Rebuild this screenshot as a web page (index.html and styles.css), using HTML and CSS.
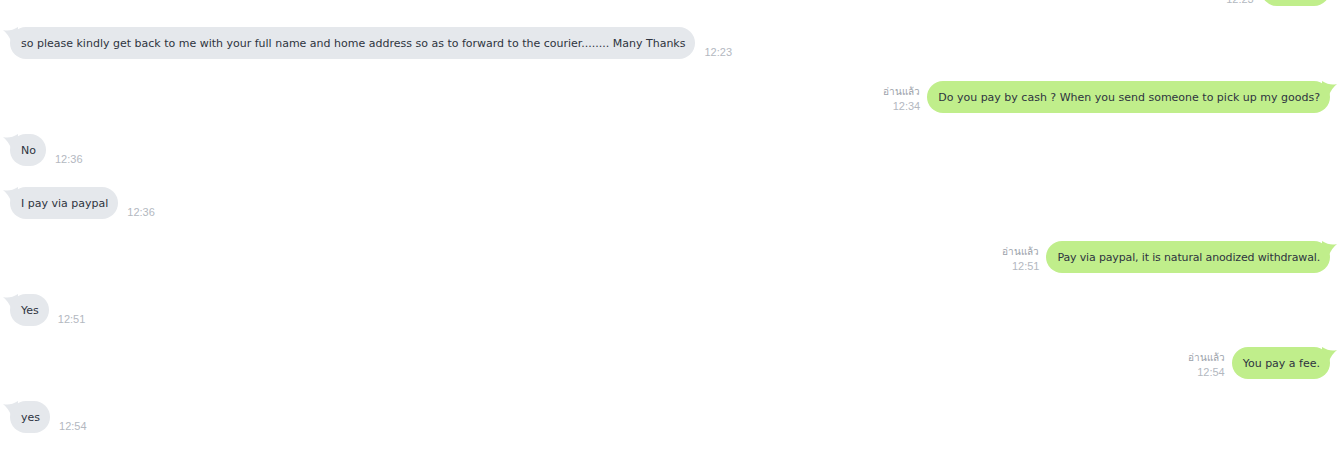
FILE: index.html
```html
<!DOCTYPE html>
<html lang="th">
<head>
<meta charset="utf-8">
<title>Chat</title>
<link rel="stylesheet" href="styles.css">
</head>
<body>
<div class="viewport">
  <div class="chat">
    <div class="row out">
      <div class="meta"><span class="read">อ่านแล้ว</span><span class="time">12:23</span></div>
      <div class="bubble green">Thanks!!<svg class="tail" viewBox="0 0 16 16" width="16" height="16"><path d="M15 3 Q8 5 0 0 L0 16 L7 14 Q10 7 15 3 Z"/></svg></div>
    </div>
    <div class="row in">
      <div class="bubble gray"><svg class="tail" viewBox="0 0 16 16" width="16" height="16"><path d="M1 3 Q8 5 16 0 L16 16 L9 14 Q6 7 1 3 Z"/></svg>so please kindly get back to me with your full name and home address so as to forward to the courier........ Many Thanks</div>
      <span class="time">12:23</span>
    </div>
    <div class="row out">
      <div class="meta"><span class="read">อ่านแล้ว</span><span class="time">12:34</span></div>
      <div class="bubble green">Do you pay by cash ? When you send someone to pick up my goods?<svg class="tail" viewBox="0 0 16 16" width="16" height="16"><path d="M15 3 Q8 5 0 0 L0 16 L7 14 Q10 7 15 3 Z"/></svg></div>
    </div>
    <div class="row in">
      <div class="bubble gray"><svg class="tail" viewBox="0 0 16 16" width="16" height="16"><path d="M1 3 Q8 5 16 0 L16 16 L9 14 Q6 7 1 3 Z"/></svg>No</div>
      <span class="time">12:36</span>
    </div>
    <div class="row in">
      <div class="bubble gray"><svg class="tail" viewBox="0 0 16 16" width="16" height="16"><path d="M1 3 Q8 5 16 0 L16 16 L9 14 Q6 7 1 3 Z"/></svg>I pay via paypal</div>
      <span class="time">12:36</span>
    </div>
    <div class="row out">
      <div class="meta"><span class="read">อ่านแล้ว</span><span class="time">12:51</span></div>
      <div class="bubble green tight">Pay via paypal, it is natural anodized withdrawal.<svg class="tail" viewBox="0 0 16 16" width="16" height="16"><path d="M15 3 Q8 5 0 0 L0 16 L7 14 Q10 7 15 3 Z"/></svg></div>
    </div>
    <div class="row in">
      <div class="bubble gray"><svg class="tail" viewBox="0 0 16 16" width="16" height="16"><path d="M1 3 Q8 5 16 0 L16 16 L9 14 Q6 7 1 3 Z"/></svg>Yes</div>
      <span class="time">12:51</span>
    </div>
    <div class="row out">
      <div class="meta"><span class="read">อ่านแล้ว</span><span class="time">12:54</span></div>
      <div class="bubble green">You pay a fee.<svg class="tail" viewBox="0 0 16 16" width="16" height="16"><path d="M15 3 Q8 5 0 0 L0 16 L7 14 Q10 7 15 3 Z"/></svg></div>
    </div>
    <div class="row in">
      <div class="bubble gray"><svg class="tail" viewBox="0 0 16 16" width="16" height="16"><path d="M1 3 Q8 5 16 0 L16 16 L9 14 Q6 7 1 3 Z"/></svg>yes</div>
      <span class="time">12:54</span>
    </div>
  </div>
</div>
</body>
</html>
```
FILE: styles.css
```css
html, body {
  margin: 0;
  padding: 0;
  background: #ffffff;
  overflow: hidden;
}
.viewport {
  width: 1338px;
  height: 450px;
  overflow: hidden;
  font-family: "Liberation Sans", "DejaVu Sans", sans-serif;
}
.chat {
  display: flex;
  flex-direction: column;
  gap: 21.33px;
  margin-top: -26px;
  padding: 0 8px 0 10px;
}
.row {
  display: flex;
  align-items: flex-end;
}
.row.out {
  justify-content: flex-end;
}
.bubble {
  position: relative;
  height: 32px;
  line-height: 33px;
  border-radius: 16px;
  padding: 0 10px 0 11px;
  font-family: "DejaVu Sans", "Liberation Sans", sans-serif;
  font-size: 11px;
  color: #2e3440;
  white-space: nowrap;
}
.bubble.tight {
  letter-spacing: -0.15px;
}
.bubble.gray {
  background: #e5e8ec;
}
.bubble.green {
  background: #c0ee8b;
}
.tail {
  position: absolute;
  top: 0;
}
.gray .tail {
  left: -8px;
  fill: #e5e8ec;
}
.green .tail {
  right: -8px;
  fill: #c0ee8b;
}
.row.in .time {
  margin-left: 9px;
  margin-bottom: 0;
}
.time {
  font-size: 11px;
  line-height: 14px;
  color: #b3b8bf;
}
.meta {
  display: flex;
  flex-direction: column;
  align-items: flex-end;
  margin-right: 7px;
  margin-bottom: 0;
}
.read {
  font-size: 10px;
  line-height: 14px;
  color: #9ba1a9;
}
```
